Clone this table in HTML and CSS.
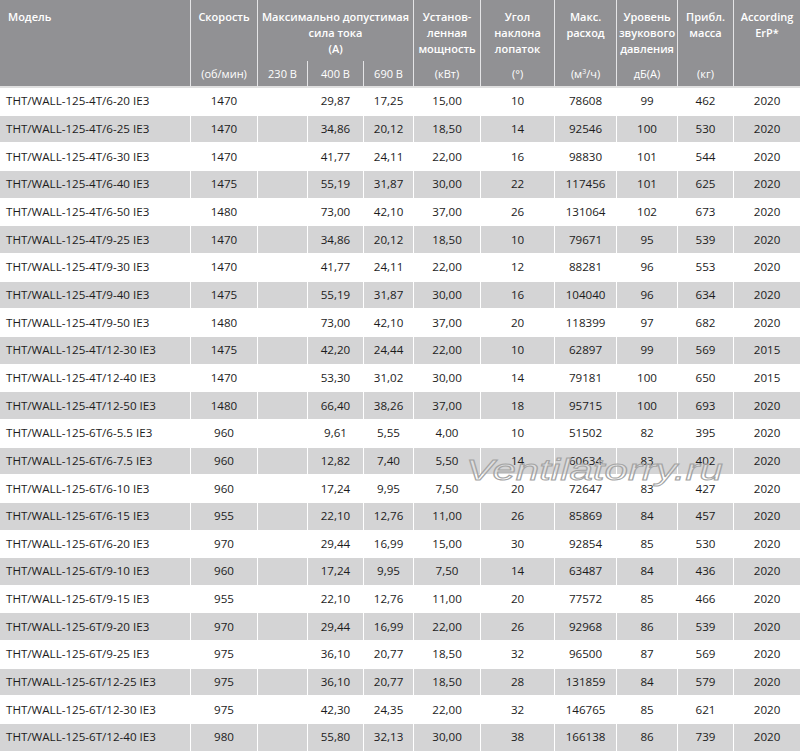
FILE: index.html
```html
<!DOCTYPE html>
<html lang="ru">
<head>
<meta charset="utf-8">
<title>THT/WALL</title>
<link rel="stylesheet" href="styles.css">
</head>
<body>
<div class="wrap">
<table class="spec">
  <colgroup>
    <col class="c-model"><col class="c-speed"><col class="c-v1"><col class="c-v2"><col class="c-v3">
    <col class="c-pow"><col class="c-ang"><col class="c-flow"><col class="c-snd"><col class="c-mass"><col class="c-erp">
  </colgroup>
  <thead>
    <tr class="h-title">
      <th rowspan="2" class="h-model">Модель</th>
      <th>Скорость</th>
      <th colspan="3">Максимально допустимая<br>сила тока<br>(A)</th>
      <th>Установ-<br>ленная<br>мощность</th>
      <th>Угол<br>наклона<br>лопаток</th>
      <th>Макс.<br>расход</th>
      <th>Уровень<br>звукового<br>давления</th>
      <th>Прибл.<br>масса</th>
      <th>According<br>ErP*</th>
    </tr>
    <tr class="h-unit">
      <th>(об/мин)</th>
      <th>230 В</th>
      <th>400 В</th>
      <th>690 В</th>
      <th>(кВт)</th>
      <th>(°)</th>
      <th>(м<sup>3</sup>/ч)</th>
      <th>дБ(А)</th>
      <th>(кг)</th>
      <th></th>
    </tr>
  </thead>
  <tbody>
    <tr><td>THT/WALL-125-4T/6-20 IE3</td><td>1470</td><td></td><td>29,87</td><td>17,25</td><td>15,00</td><td>10</td><td>78608</td><td>99</td><td>462</td><td>2020</td></tr>
    <tr><td>THT/WALL-125-4T/6-25 IE3</td><td>1470</td><td></td><td>34,86</td><td>20,12</td><td>18,50</td><td>14</td><td>92546</td><td>100</td><td>530</td><td>2020</td></tr>
    <tr><td>THT/WALL-125-4T/6-30 IE3</td><td>1470</td><td></td><td>41,77</td><td>24,11</td><td>22,00</td><td>16</td><td>98830</td><td>101</td><td>544</td><td>2020</td></tr>
    <tr><td>THT/WALL-125-4T/6-40 IE3</td><td>1475</td><td></td><td>55,19</td><td>31,87</td><td>30,00</td><td>22</td><td>117456</td><td>101</td><td>625</td><td>2020</td></tr>
    <tr><td>THT/WALL-125-4T/6-50 IE3</td><td>1480</td><td></td><td>73,00</td><td>42,10</td><td>37,00</td><td>26</td><td>131064</td><td>102</td><td>673</td><td>2020</td></tr>
    <tr><td>THT/WALL-125-4T/9-25 IE3</td><td>1470</td><td></td><td>34,86</td><td>20,12</td><td>18,50</td><td>10</td><td>79671</td><td>95</td><td>539</td><td>2020</td></tr>
    <tr><td>THT/WALL-125-4T/9-30 IE3</td><td>1470</td><td></td><td>41,77</td><td>24,11</td><td>22,00</td><td>12</td><td>88281</td><td>96</td><td>553</td><td>2020</td></tr>
    <tr><td>THT/WALL-125-4T/9-40 IE3</td><td>1475</td><td></td><td>55,19</td><td>31,87</td><td>30,00</td><td>16</td><td>104040</td><td>96</td><td>634</td><td>2020</td></tr>
    <tr><td>THT/WALL-125-4T/9-50 IE3</td><td>1480</td><td></td><td>73,00</td><td>42,10</td><td>37,00</td><td>20</td><td>118399</td><td>97</td><td>682</td><td>2020</td></tr>
    <tr><td>THT/WALL-125-4T/12-30 IE3</td><td>1475</td><td></td><td>42,20</td><td>24,44</td><td>22,00</td><td>10</td><td>62897</td><td>99</td><td>569</td><td>2015</td></tr>
    <tr><td>THT/WALL-125-4T/12-40 IE3</td><td>1470</td><td></td><td>53,30</td><td>31,02</td><td>30,00</td><td>14</td><td>79181</td><td>100</td><td>650</td><td>2015</td></tr>
    <tr><td>THT/WALL-125-4T/12-50 IE3</td><td>1480</td><td></td><td>66,40</td><td>38,26</td><td>37,00</td><td>18</td><td>95715</td><td>100</td><td>693</td><td>2020</td></tr>
    <tr><td>THT/WALL-125-6T/6-5.5 IE3</td><td>960</td><td></td><td>9,61</td><td>5,55</td><td>4,00</td><td>10</td><td>51502</td><td>82</td><td>395</td><td>2020</td></tr>
    <tr><td>THT/WALL-125-6T/6-7.5 IE3</td><td>960</td><td></td><td>12,82</td><td>7,40</td><td>5,50</td><td>14</td><td>60634</td><td>83</td><td>402</td><td>2020</td></tr>
    <tr><td>THT/WALL-125-6T/6-10 IE3</td><td>960</td><td></td><td>17,24</td><td>9,95</td><td>7,50</td><td>20</td><td>72647</td><td>83</td><td>427</td><td>2020</td></tr>
    <tr><td>THT/WALL-125-6T/6-15 IE3</td><td>955</td><td></td><td>22,10</td><td>12,76</td><td>11,00</td><td>26</td><td>85869</td><td>84</td><td>457</td><td>2020</td></tr>
    <tr><td>THT/WALL-125-6T/6-20 IE3</td><td>970</td><td></td><td>29,44</td><td>16,99</td><td>15,00</td><td>30</td><td>92854</td><td>85</td><td>530</td><td>2020</td></tr>
    <tr><td>THT/WALL-125-6T/9-10 IE3</td><td>960</td><td></td><td>17,24</td><td>9,95</td><td>7,50</td><td>14</td><td>63487</td><td>84</td><td>436</td><td>2020</td></tr>
    <tr><td>THT/WALL-125-6T/9-15 IE3</td><td>955</td><td></td><td>22,10</td><td>12,76</td><td>11,00</td><td>20</td><td>77572</td><td>85</td><td>466</td><td>2020</td></tr>
    <tr><td>THT/WALL-125-6T/9-20 IE3</td><td>970</td><td></td><td>29,44</td><td>16,99</td><td>22,00</td><td>26</td><td>92968</td><td>86</td><td>539</td><td>2020</td></tr>
    <tr><td>THT/WALL-125-6T/9-25 IE3</td><td>975</td><td></td><td>36,10</td><td>20,77</td><td>18,50</td><td>32</td><td>96500</td><td>87</td><td>569</td><td>2020</td></tr>
    <tr><td>THT/WALL-125-6T/12-25 IE3</td><td>975</td><td></td><td>36,10</td><td>20,77</td><td>18,50</td><td>28</td><td>131859</td><td>84</td><td>579</td><td>2020</td></tr>
    <tr><td>THT/WALL-125-6T/12-30 IE3</td><td>975</td><td></td><td>42,30</td><td>24,35</td><td>22,00</td><td>32</td><td>146765</td><td>85</td><td>621</td><td>2020</td></tr>
    <tr><td>THT/WALL-125-6T/12-40 IE3</td><td>980</td><td></td><td>55,80</td><td>32,13</td><td>30,00</td><td>38</td><td>166138</td><td>86</td><td>739</td><td>2020</td></tr>
  </tbody>
</table>
<div class="watermark">Ventilatorry.ru</div>
</div>
</body>
</html>
```
FILE: styles.css
```css
html, body {
  margin: 0;
  padding: 0;
  background: #ffffff;
}

.wrap {
  position: relative;
  width: 800px;
  height: 751px;
  overflow: hidden;
}

.spec {
  width: 800px;
  table-layout: fixed;
  border-collapse: separate;
  border-spacing: 0;
  font-family: "Open Sans", "Noto Sans", sans-serif;
  color: #1c1c1c;
}

.c-model { width: 190px; }
.c-speed { width: 67px; }
.c-v1 { width: 50px; }
.c-v2 { width: 56px; }
.c-v3 { width: 50px; }
.c-pow { width: 67px; }
.c-ang { width: 74px; }
.c-flow { width: 62px; }
.c-snd { width: 61px; }
.c-mass { width: 56px; }
.c-erp { width: 67px; }

.spec th {
  background: #919194;
  color: #ffffff;
  padding: 0;
  text-align: center;
  border-left: 1px solid #e4e4e6;
  white-space: nowrap;
}

.h-title th {
  height: 61px;
  vertical-align: top;
  padding-top: 9px;
  box-sizing: border-box;
  font-size: 11px;
  font-weight: 600;
  line-height: 16px;
}

.spec th.h-model {
  text-align: left;
  padding-left: 8px;
  border-left: 0;
  border-bottom: 2px solid #e0e0e0;
}

.h-unit th {
  height: 24px;
  vertical-align: middle;
  font-size: 11px;
  font-weight: 400;
  line-height: 14px;
  border-bottom: 2px solid #e0e0e0;
  padding-top: 1px;
}

.h-unit sup {
  font-size: 7px;
  line-height: 0;
  vertical-align: 4px;
}

.spec tbody tr {
  height: 27.67px;
}

.spec td {
  padding: 0;
  font-size: 11.6px;
  line-height: 14px;
  text-align: center;
  vertical-align: middle;
  border-left: 1px solid #ffffff;
  border-bottom: 1px solid #ffffff;
  white-space: nowrap;
}

.spec td:first-child {
  text-align: left;
  padding-left: 6px;
  border-left: 0;
}

.spec tbody tr:nth-child(even) td {
  background: #d4d4d5;
}

.watermark {
  position: absolute;
  left: 466px;
  top: 455px;
  font-family: "Liberation Sans", Arial, sans-serif;
  font-style: italic;
  font-size: 30px;
  line-height: 30px;
  color: rgba(255, 255, 255, 0.25);
  -webkit-text-stroke: 1px #a4a4a4;
  transform: scaleX(1.4);
  transform-origin: left top;
  white-space: nowrap;
  pointer-events: none;
}
```
